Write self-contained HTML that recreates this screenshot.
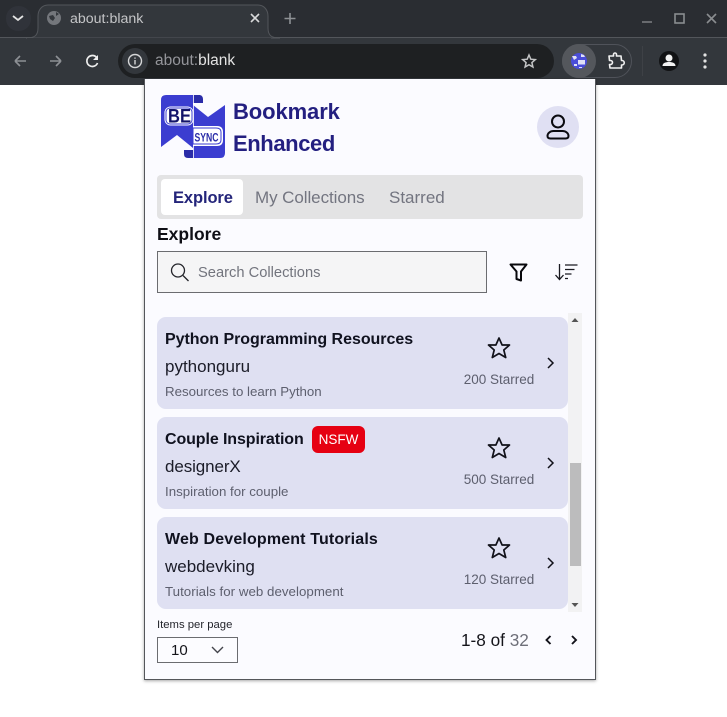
<!DOCTYPE html>
<html><head><meta charset="utf-8"><style>
*{box-sizing:border-box}
html,body{margin:0;padding:0;width:727px;height:717px;overflow:hidden;background:#fff;font-family:"Liberation Sans",sans-serif}
.a{position:absolute;white-space:nowrap}
svg{position:absolute;overflow:visible}
.card{position:absolute;left:157px;width:411px;height:92px;background:#dfe0f2;border-radius:9px}
.t{font-weight:700;font-size:16px;color:#10121f}
.u{font-size:17px;color:#1b1c28}
.d{font-size:13.3px;color:#5d5f6e}
.s{font-size:13.5px;color:#5d5f6e;width:90px;text-align:center}
</style></head><body>
<div class="a" style="left:0;top:0;width:727px;height:38px;background:#2a2d32"></div>
<div class="a" style="left:0;top:37px;width:727px;height:48px;background:#33373c;border-top:1px solid #53565b"></div>
<div class="a" style="left:6px;top:6px;width:25px;height:25px;border-radius:12px;background:#30333a"></div>
<svg style="left:0;top:0" width="727" height="85" fill="none">
<path d="M13 16l5 4 5-4" stroke="#e3e3e3" stroke-width="1.800"/>
<path d="M26 38c8 0 12-2 12-10V16c0-6 4-11 10-11h210c6 0 10 5 10 11v12c0 8 4 10 12 10z" fill="#33373c" stroke="#53565b"/>
<path d="M27 38h244v2H27z" fill="#33373c"/>
<circle cx="54" cy="18" r="7" fill="#74777c"/>
<path d="M49 16l4-1 2 3-2 3-3-2zM56 12l3 2-3 2z" fill="#33373c"/>
<path d="M251 14l8 8M259 14l-8 8" stroke="#d9dadb" stroke-width="1.600"/>
<path d="M290 13v11M284.500 18.500h11" stroke="#8d9094" stroke-width="1.600"/>
<path d="M642 22h10" stroke="#777a7e" stroke-width="1.600"/>
<rect x="675" y="14" width="9" height="9" stroke="#8a8d90" stroke-width="1.600"/>
<path d="M707 14l9 9M716 14l-9 9" stroke="#8a8d90" stroke-width="1.600"/>
<path d="M26 61h-11M15 61l5-5M15 61l5 5" stroke="#8d9094" stroke-width="1.600"/>
<path d="M50 61h11M61 61l-5-5M61 61l-5 5" stroke="#8d9094" stroke-width="1.600"/>
<path d="M97 58a5.500 5.500 0 1 0 .5 5" stroke="#eee" stroke-width="1.700"/><path d="M98 55v5h-5z" fill="#eee"/>
</svg>
<div class="a" style="left:118px;top:44px;width:436px;height:34px;border-radius:17px;background:#1e2022"></div>
<div class="a" style="left:122px;top:48px;width:26px;height:26px;border-radius:13px;background:#33373c"></div>
<svg style="left:0;top:0" width="727" height="85" fill="none">
<circle cx="135" cy="61" r="6.500" stroke="#d5d6d7" stroke-width="1.400"/><path d="M135 60v4.500M135 57.500v1.200" stroke="#d5d6d7" stroke-width="1.400"/>
<path d="M529 55l1.800 4.200 4.500.4-3.400 3 1 4.400-3.900-2.300-3.900 2.300 1-4.400-3.400-3 4.500-.4z" stroke="#c4c5c6" stroke-width="1.500"/>
<rect x="562.500" y="44.500" width="69" height="33" rx="16.500" stroke="#50535a"/>
<circle cx="579" cy="61" r="17" fill="#54575c"/>
<circle cx="579" cy="61" r="8" fill="#4a4dd8"/><path d="M572 56l4 0 1 2-3 2zM581 54l3 1 1 2-4 0zM578 60h7v4.500h-7zM574 64h3v2h-3zM579 67h3v1h-3z" fill="#dfe0f5"/>
<path d="M609 56h4.500v-1.500a1.500 1.500 0 0 1 3 0V56H621l.5 4.500h.5a2 2 0 0 1 0 4.500h-.5v3H610l-.5-3.500h1a2 2 0 0 0 0-4h-1z" stroke="#f0f0f0" stroke-width="1.600" stroke-linejoin="round"/>
<path d="M642.500 46v30" stroke="#3e4146"/>
<circle cx="669" cy="61" r="10" fill="#111214"/>
<circle cx="669" cy="58" r="3.500" fill="#f2f2f2"/><path d="M662.500 66c0-3 3-4 6.500-4s6.500 1 6.500 4z" fill="#f2f2f2"/>
<circle cx="705" cy="55" r="1.600" fill="#e3e3e3"/><circle cx="705" cy="61" r="1.600" fill="#e3e3e3"/><circle cx="705" cy="67" r="1.600" fill="#e3e3e3"/>
</svg>
<div class="a" style="left:70px;top:10px;font-size:14.200px;line-height:18px;color:#c4c5c7">about:blank</div>
<div class="a" style="left:155px;top:52px;font-size:15.500px;line-height:18px;color:#94959a">about:<span style="color:#e3e3e3">blank</span></div>

<div class="a" style="left:144px;top:79px;width:452px;height:601px;background:#fbfbff;border:1px solid #54565a;border-top:0;box-shadow:0 1px 3px rgba(0,0,0,.35)"></div>

<svg style="left:161px;top:95px" width="65" height="64">
<path d="M0 5Q0 0 5 0H32V53L16 40 0 52z" fill="#3b3dd0"/>
<path d="M32 10L47 22 64 10V58Q64 63 59 63H32z" fill="#3b3dd0"/>
<path d="M32 0H39Q42 1 42 4V8H32z" fill="#2a2ca8"/>
<path d="M23 55H32V63H27Q23 63 23 59z" fill="#2a2ca8"/>
<rect x="3.500" y="11.500" width="29" height="19" rx="6" fill="#fff"/>
<rect x="5" y="13" width="26" height="16" rx="4" fill="#fff" stroke="#3b3dd0" stroke-width="1"/>
<path d="M32.500 0V63" stroke="#fff" stroke-width=".8"/>
<path d="M32 31H56Q62 31 62 37V45Q62 51 56 51H32z" fill="#fff"/>
<path d="M32 33H55Q60 33 60 37V45Q60 49 55 49H32z" fill="#fff" stroke="#3b3dd0" stroke-width="1"/>
<text x="7" y="27.500" font-family="Liberation Sans" font-weight="700" font-size="19" fill="#14156a" textLength="23" lengthAdjust="spacingAndGlyphs">BE</text>
<text x="33.500" y="46.500" font-family="Liberation Sans" font-weight="700" font-size="12" fill="#2b2da8" textLength="24" lengthAdjust="spacingAndGlyphs">SYNC</text>
</svg>
<div class="a" style="left:233px;top:98px;font-size:22px;line-height:28px;font-weight:700;color:#231f80;letter-spacing:-.1px">Bookmark</div>
<div class="a" style="left:233px;top:130px;font-size:22px;line-height:28px;font-weight:700;color:#231f80;letter-spacing:-.4px">Enhanced</div>
<div class="a" style="left:537px;top:106px;width:42px;height:42px;border-radius:21px;background:#e0e0f3"></div>
<svg style="left:537px;top:106px" width="42" height="42" fill="none" stroke="#0b0b10" stroke-width="2">
<circle cx="21" cy="15.500" r="6"/><path d="M13.500 32.500h15c2 0 3-1 3-2.500 0-3-3-5-6-5h-9c-3 0-6 2-6 5 0 1.500 1 2.500 3 2.500z"/>
</svg>

<div class="a" style="left:157px;top:175px;width:426px;height:44px;border-radius:4px;background:#e3e3e4"></div>
<div class="a" style="left:161px;top:179px;width:82px;height:36px;border-radius:4px;background:#fff"></div>
<div class="a" style="left:173px;top:188px;font-size:16.500px;line-height:20px;font-weight:700;color:#24257a;letter-spacing:-.1px">Explore</div>
<div class="a" style="left:255px;top:188px;font-size:17px;line-height:20px;color:#737580;letter-spacing:-.07px">My Collections</div>
<div class="a" style="left:389px;top:188px;font-size:17px;line-height:20px;color:#737580">Starred</div>
<div class="a" style="left:157px;top:223px;font-size:17.500px;line-height:22px;font-weight:700;color:#0f0f16">Explore</div>

<div class="a" style="left:157px;top:251px;width:330px;height:42px;background:#f5f5f6;border:1px solid #6b6c70"></div>
<svg style="left:170px;top:263px" width="20" height="20" fill="none" stroke="#24252b" stroke-width="1.300"><circle cx="8" cy="7.500" r="6.500"/><path d="M13 12.500l5.500 5.500"/></svg>
<div class="a" style="left:198px;top:264px;font-size:14.700px;line-height:18px;color:#72747d">Search Collections</div>
<svg style="left:508px;top:262px" width="24" height="22" fill="none" stroke="#08080c" stroke-width="2"><path d="M2.500 2.500h16l-5.500 7v9l-4.500-1.500V9.500z" stroke-linejoin="round"/></svg>
<svg style="left:554px;top:262px" width="26" height="20" fill="none" stroke="#1a1a20" stroke-width="1.300"><path d="M5.500 2v15M1.500 13l4 4.500 4-4.500M11 3h12.500M11 7.500h9.500M11 12h6.500M11 16.500h3"/></svg>

<div class="a" style="left:568px;top:313px;width:14px;height:299px;background:#f2f2f3"></div>
<div class="a" style="left:570px;top:463px;width:11px;height:103px;background:#bcbcbd"></div>
<svg style="left:568px;top:313px" width="14" height="299" fill="#555"><path d="M3.500 9L7 5l3.500 4zM3.500 290l3.500 4 3.500-4z"/></svg>

<div class="card" style="top:317px"></div>
<div class="a t" style="left:165px;top:330px;line-height:19px;letter-spacing:-.03px">Python Programming Resources</div>
<div class="a u" style="left:165px;top:357px;line-height:20px">pythonguru</div>
<div class="a d" style="left:165px;top:384px;line-height:16px">Resources to learn Python</div>
<div class="a s" style="left:454px;top:372px;line-height:16px">200 Starred</div>

<div class="card" style="top:417px"></div>
<div class="a t" style="left:165px;top:430px;line-height:19px;letter-spacing:-.1px">Couple Inspiration</div>
<div class="a" style="left:312px;top:426px;width:53px;height:27px;border-radius:6px;background:#e60012;color:#fff;font-size:13.500px;line-height:27px;text-align:center">NSFW</div>
<div class="a u" style="left:165px;top:457px;line-height:20px;letter-spacing:-.1px">designerX</div>
<div class="a d" style="left:165px;top:484px;line-height:16px">Inspiration for couple</div>
<div class="a s" style="left:454px;top:472px;line-height:16px">500 Starred</div>

<div class="card" style="top:517px"></div>
<div class="a t" style="left:165px;top:530px;line-height:19px;letter-spacing:.15px">Web Development Tutorials</div>
<div class="a u" style="left:165px;top:557px;line-height:20px">webdevking</div>
<div class="a d" style="left:165px;top:584px;line-height:16px;letter-spacing:.03px">Tutorials for web development</div>
<div class="a s" style="left:454px;top:572px;line-height:16px">120 Starred</div>

<svg style="left:0;top:0" width="727" height="717" fill="none" stroke="#12121a" stroke-width="1.700">
<path d="M499 338l3.100 7h7.400l-5.700 5 1.900 7.500-6.700-4-6.700 4 1.900-7.500-5.700-5h7.400z" stroke-linejoin="round"/>
<path d="M499 438l3.100 7h7.400l-5.700 5 1.900 7.500-6.700-4-6.700 4 1.900-7.500-5.700-5h7.400z" stroke-linejoin="round"/>
<path d="M499 538l3.100 7h7.400l-5.700 5 1.900 7.500-6.700-4-6.700 4 1.900-7.500-5.700-5h7.400z" stroke-linejoin="round"/>
<path d="M548 358l5 5-5 5M548 458l5 5-5 5M548 558l5 5-5 5" stroke-width="1.500"/>
<path d="M550.500 636l-4 4 4 4M572 636l4 4-4 4" stroke-width="1.900"/>
</svg>

<div class="a" style="left:157px;top:618px;font-size:11.300px;line-height:14px;color:#24252c">Items per page</div>
<div class="a" style="left:157px;top:637px;width:81px;height:26px;background:#fcfcff;border:1px solid #6b6c70"></div>
<div class="a" style="left:171px;top:642px;font-size:15px;line-height:18px;color:#14141a">10</div>
<svg style="left:211px;top:646px" width="14" height="8" fill="none" stroke="#44454c" stroke-width="1.400"><path d="M1 1l5.500 5.500L12 1"/></svg>
<div class="a" style="left:461px;top:631px;font-size:17.200px;line-height:19px;color:#14141a">1-8 of <span style="color:#6e6f79">32</span></div>
</body></html>
